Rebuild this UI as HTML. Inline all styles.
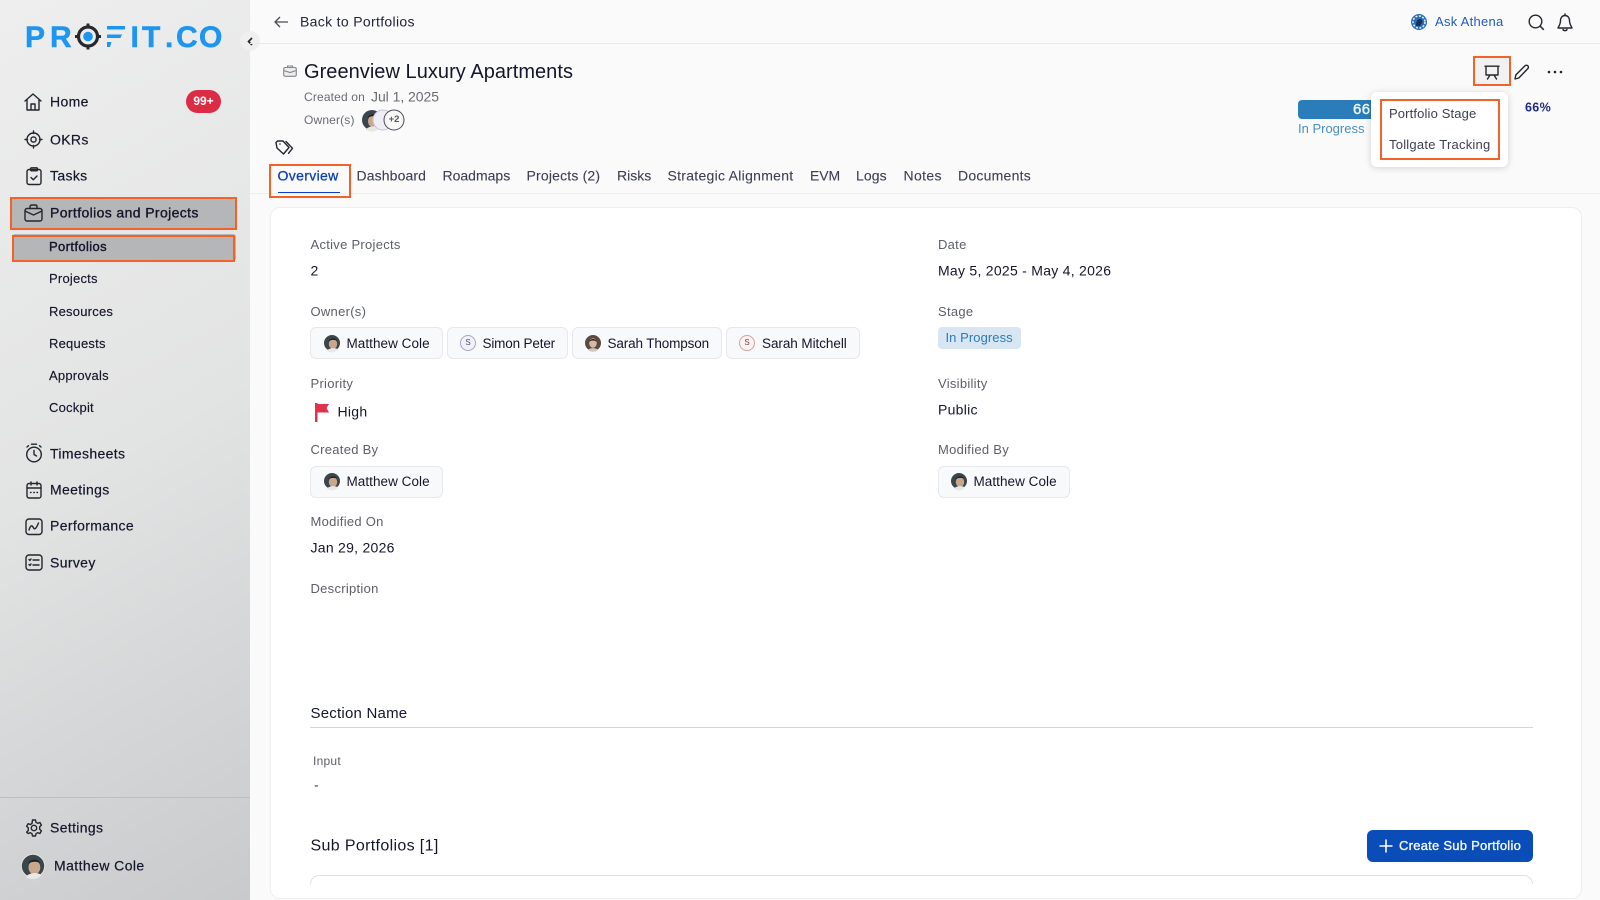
<!DOCTYPE html>
<html lang="en">
<head>
<meta charset="utf-8">
<title>Greenview Luxury Apartments</title>
<style>
html,body{margin:0;padding:0;width:1600px;height:900px;overflow:hidden;background:#fafafa;font-family:"Liberation Sans",sans-serif;color:#14162b}
.abs{position:absolute}
.t{position:absolute;white-space:nowrap;transform:translateY(-50%);line-height:1.2;font-size:14px;letter-spacing:.35px}
svg{position:absolute;overflow:visible}
.i{fill:none;stroke:#24262e;stroke-width:1.4;stroke-linecap:round;stroke-linejoin:round}
#side{position:absolute;left:0;top:0;width:250px;height:900px;background:linear-gradient(150deg,#eeeeee 0%,#e2e3e3 50%,#c9cacc 100%)}
.nav{-webkit-text-stroke:.2px #14162b}
.sub{font-size:13px;letter-spacing:.22px;-webkit-text-stroke:.15px #14162b}
.lab{font-size:13px;color:#5d6068;letter-spacing:.28px}
.val{font-size:14px;letter-spacing:.27px}
.tab{font-size:14px;color:#3c3e52;letter-spacing:.24px;-webkit-text-stroke:.1px #3c3e52}
.chip{position:absolute;background:#f8f9fb;border:1.5px solid #e7e8eb;border-radius:6px;box-sizing:border-box;height:32px}
.orange{position:absolute;border:2px solid #f4622a;box-sizing:border-box}
</style>
</head>
<body>
<svg width="0" height="0" style="position:absolute">
<defs>
<g id="man"><circle cx="0" cy="0" r="8" fill="#39464c"/><ellipse cx="1" cy="1" rx="4.2" ry="5" fill="#c9a68c"/><path d="M-3.5-1.5C-3-5 4-6 5-2 3-3.500-1-3.500-3.500-1.500Z" fill="#1e2326"/><path d="M-5 7.800C-3 4.500 4 4.500 6 6.500A8 8 0 0 1-5 7.800Z" fill="#e8e8e6"/></g>
<g id="wom"><circle cx="0" cy="0" r="8" fill="#5b4a40"/><ellipse cx="0" cy="0" rx="3.800" ry="4.800" fill="#d8b8a4"/><path d="M-4-1C-3-5 3-5 4-1 2-3-2-3-4-1Z" fill="#2d2420"/><path d="M-5 7C-3 4.500 3 4.500 5 7A8 8 0 0 1-5 7Z" fill="#cfc8c2"/></g>
</defs>
</svg>

<!-- SIDEBAR -->
<div id="side"></div>

<svg style="left:0;top:0" width="250" height="70">
<text y="47" x="25 50" font-family="Liberation Sans" font-weight="700" font-size="30" fill="#1e96f0" stroke="#1e96f0" stroke-width=".5">PR</text>
<circle cx="88" cy="36.500" r="9.500" fill="none" stroke="#26282c" stroke-width="3.200"/>
<circle cx="88" cy="36.500" r="4.800" fill="#1e96f0"/>
<path d="M88 23.500v4M88 45.500v4M75 36.500h4M97 36.500h4" stroke="#26282c" stroke-width="3"/>
<path d="M107 26h18v3.500h-18zM107 34.500h15l-1.500 3.500H107zM107 42h4.500l-1.500 5h-3z" fill="#1e96f0"/>
<text y="47" x="130.500 142 165 176 199" font-family="Liberation Sans" font-weight="700" font-size="30" fill="#1e96f0" stroke="#1e96f0" stroke-width=".5">IT.CO</text>
</svg>

<div class="t nav" style="left:50px;top:102px">Home</div>
<div class="abs" style="left:186px;top:90px;width:35px;height:23px;border-radius:12px;background:#dc2b45;color:#fff;font-size:12px;font-weight:700;text-align:center;line-height:23px">99+</div>
<div class="t nav" style="left:50px;top:140px">OKRs</div>
<div class="t nav" style="left:50px;top:176px">Tasks</div>

<div class="abs" style="left:10px;top:197px;width:227px;height:33px;background:#b5b6b8"></div>
<div class="orange" style="left:10px;top:197px;width:227px;height:33px"></div>
<div class="t nav" style="left:50px;top:213px;-webkit-text-stroke:.35px #14162b;letter-spacing:.38px">Portfolios and Projects</div>
<div class="abs" style="left:12px;top:234px;width:224px;height:27px;background:#b5b6b8;border-radius:3px"></div>
<div class="orange" style="left:12px;top:235px;width:223px;height:27px"></div>
<div class="t sub" style="left:49px;top:246.500px;-webkit-text-stroke:.4px #14162b;letter-spacing:.38px">Portfolios</div>
<div class="t sub" style="left:49px;top:279px">Projects</div>
<div class="t sub" style="left:49px;top:311.500px">Resources</div>
<div class="t sub" style="left:49px;top:344px">Requests</div>
<div class="t sub" style="left:49px;top:376px">Approvals</div>
<div class="t sub" style="left:49px;top:408px">Cockpit</div>
<div class="t nav" style="left:50px;top:453.500px">Timesheets</div>
<div class="t nav" style="left:50px;top:490px">Meetings</div>
<div class="t nav" style="left:50px;top:526px">Performance</div>
<div class="t nav" style="left:50px;top:563px">Survey</div>
<div class="abs" style="left:0;top:797px;width:250px;height:1px;background:#bdbec0"></div>
<div class="t nav" style="left:50px;top:828px">Settings</div>
<div class="t nav" style="left:54px;top:866px;font-size:14px;letter-spacing:.42px">Matthew Cole</div>
<svg style="left:33px;top:866px" width="1" height="1"><circle r="12" fill="#e8e8e8"/><g transform="scale(1.400)"><use href="#man"/></g></svg>

<!-- sidebar icons -->
<svg style="left:24px;top:93px" width="18" height="18" viewBox="0 0 18 18"><path class="i" d="M1 8 9 1l8 7M3 7v10h12V7M7 17v-6h4v6"/></svg>
<svg style="left:24px;top:130px" width="19" height="19" viewBox="0 0 19 19"><circle class="i" cx="9.500" cy="9.500" r="6.500"/><circle class="i" cx="9.500" cy="9.500" r="2.600"/><path class="i" d="M9.500 1v2.500M9.500 15.500V18M1 9.500h2.500M15.500 9.500H18"/></svg>
<svg style="left:26px;top:167px" width="16" height="18" viewBox="0 0 16 18"><rect class="i" x="1" y="2.500" width="14" height="15" rx="2"/><rect class="i" x="4.500" y=".8" width="7" height="3" rx="1"/><path class="i" d="m5 10.500 2.300 2.300L11 9"/></svg>
<svg style="left:24px;top:204px" width="19" height="18" viewBox="0 0 19 18"><rect class="i" x="1" y="4.500" width="17" height="12.500" rx="2"/><path class="i" d="M6 4.500V2.500C6 1.500 7 1 8 1h3c1 0 2 .5 2 1.500v2M1 7l8.500 4L18 7"/></svg>
<svg style="left:25px;top:443px" width="18" height="20" viewBox="0 0 18 20"><circle class="i" cx="9" cy="11.500" r="7.300"/><path class="i" d="M9 7.500v4l2.500 1.500M6.500 1.200h5M2 4l1.500-1.300M16 4l-1.500-1.300"/></svg>
<svg style="left:26px;top:481px" width="16" height="18" viewBox="0 0 16 18"><rect class="i" x="1" y="2.500" width="14" height="14.500" rx="2"/><path class="i" d="M1 7h14M5 1v3M11 1v3M4.500 11.500h.5M7.800 11.500h.5M11 11.500h.5"/></svg>
<svg style="left:25px;top:518px" width="18" height="17" viewBox="0 0 18 17"><rect class="i" x="1" y="1" width="16" height="15.500" rx="3"/><path class="i" d="M4 12c1.500-5 3-5 4.300-2.500S11 11 13.500 5"/></svg>
<svg style="left:25px;top:554px" width="18" height="17" viewBox="0 0 18 17"><rect class="i" x="1" y="1" width="16" height="15" rx="3"/><path class="i" d="M8 6h6M8 11h6M4 5.500l1 1 1-1.500M4 10.500l1 1 1-1.500"/></svg>
<svg style="left:25px;top:819px" width="18" height="18" viewBox="0 0 18 18"><circle class="i" cx="9" cy="9" r="2.700"/><path class="i" d="M7.500 1h3l.5 2.300 1.700 1 2.200-.8 1.500 2.600-1.700 1.600v2.600l1.700 1.600-1.500 2.600-2.200-.8-1.700 1-.5 2.300h-3l-.5-2.300-1.700-1-2.200.8L1.600 13.100l1.700-1.600V8.900L1.600 7.300l1.500-2.600 2.200.8 1.700-1z"/></svg>

<!-- collapse -->
<div class="abs" style="left:240px;top:31px;width:20px;height:20px;border-radius:50%;background:#efefef"></div>
<svg style="left:247px;top:37px" width="6" height="9" viewBox="0 0 6 9"><path d="M5 1 1.500 4.500 5 8" fill="none" stroke="#1e2028" stroke-width="1.600"/></svg>

<!-- HEADER -->
<div class="abs" style="left:250px;top:43px;width:1350px;height:1px;background:#e9e9e9"></div>
<svg style="left:274px;top:15px" width="15" height="14" viewBox="0 0 15 14"><path d="M14 7H1M6 2 1 7l5 5" fill="none" stroke="#4a4c55" stroke-width="1.300"/></svg>
<div class="t" style="left:300px;top:22px;font-size:14px;color:#22243a;letter-spacing:.33px">Back to Portfolios</div>

<svg style="left:1411px;top:14px" width="16" height="16" viewBox="0 0 16 16"><circle cx="8" cy="8" r="8" fill="#2a6fb8"/><circle cx="8" cy="8" r="6" fill="none" stroke="#e8eef5" stroke-width="1.500" stroke-dasharray="2 1.500"/><path d="M5 12c0-4 1-7 4-7 2 0 3 2 2 4l-2 3z" fill="#16325c"/></svg>
<div class="t" style="left:1435px;top:21.500px;font-size:13px;color:#1f5cc0;letter-spacing:.28px">Ask Athena</div>
<svg style="left:1528px;top:14px" width="17" height="17" viewBox="0 0 17 17"><circle cx="7.500" cy="7.500" r="6.300" fill="none" stroke="#24262e" stroke-width="1.400"/><path d="m12 12 3.800 3.800" stroke="#24262e" stroke-width="1.500"/></svg>
<svg style="left:1557px;top:13px" width="16" height="19" viewBox="0 0 16 19"><path class="i" d="M8 2.500C5 2.500 3.500 5 3.500 7.500c0 4-2 6-2.500 7.500h14c-.5-1.500-2.500-3.500-2.500-7.500C12.500 5 11 2.500 8 2.500ZM8 1v1.500M6 16.500c.5 1.500 3.500 1.500 4 0"/></svg>

<!-- TITLE -->
<svg style="left:283px;top:65px" width="14" height="12" viewBox="0 0 14 12"><rect x=".7" y="2.500" width="12.600" height="8.800" rx="1.500" fill="#eceded" stroke="#84868c" stroke-width="1.100"/><path d="M4.500 2.500V1h5v1.500M.7 5.500l6.300 2 6.300-2" fill="none" stroke="#84868c" stroke-width="1.100"/></svg>
<div class="t" style="left:304px;top:72px;font-size:20px;letter-spacing:.04px;color:#14162b">Greenview Luxury Apartments</div>
<div class="t" style="left:304px;top:97px;font-size:12px;color:#6a6c74;letter-spacing:.16px">Created on</div>
<div class="t" style="left:371px;top:96.500px;font-size:14px;color:#6a6c74;letter-spacing:-.05px">Jul 1, 2025</div>
<div class="t" style="left:304px;top:120px;font-size:12px;color:#6a6c74;letter-spacing:.16px">Owner(s)</div>
<svg style="left:372px;top:120px" width="1" height="1"><g transform="scale(1.250)"><use href="#man"/></g></svg>
<svg style="left:383px;top:120px" width="1" height="1"><circle r="10" fill="#efeef6" stroke="#c8c4dc"/></svg>
<svg style="left:394px;top:120px" width="1" height="1"><circle r="10" fill="#f8f8f8" stroke="#4a4c55" stroke-width="1"/></svg>
<div class="abs" style="left:384px;top:113px;width:20px;text-align:center;font-size:9.500px;font-weight:700;color:#55575f;line-height:14px">+2</div>
<svg style="left:275px;top:140px" width="19" height="16" viewBox="0 0 19 16"><path class="i" d="M1 2.500 2.500 1H8l6 6.500-5.500 6.500L2 8ZM11 1.500l6.500 6.800-4 5"/><circle cx="5" cy="4" r=".8" fill="#24262e"/></svg>

<!-- TABS -->
<div class="abs" style="left:250px;top:193px;width:1350px;height:1px;background:#eeeeee"></div>
<div class="t" style="left:277.500px;top:175.500px;font-size:14px;color:#0f40b8;letter-spacing:.35px;-webkit-text-stroke:.3px #0f40b8">Overview</div>
<div class="abs" style="left:278px;top:191.500px;width:62px;height:1.500px;background:#0f3fc4"></div>
<div class="orange" style="left:269px;top:164px;width:82px;height:34px"></div>
<div class="t tab" style="left:356.500px;top:175.500px;letter-spacing:.12px">Dashboard</div>
<div class="t tab" style="left:442.500px;top:175.500px;letter-spacing:0">Roadmaps</div>
<div class="t tab" style="left:526.500px;top:175.500px;letter-spacing:.18px">Projects (2)</div>
<div class="t tab" style="left:617px;top:175.500px;letter-spacing:.0">Risks</div>
<div class="t tab" style="left:667.500px;top:175.500px;letter-spacing:.28px">Strategic Alignment</div>
<div class="t tab" style="left:810px;top:175.500px;letter-spacing:-.1px">EVM</div>
<div class="t tab" style="left:856px;top:175.500px;letter-spacing:.1px">Logs</div>
<div class="t tab" style="left:903.500px;top:175.500px;letter-spacing:.35px">Notes</div>
<div class="t tab" style="left:958px;top:175.500px;letter-spacing:.24px">Documents</div>

<!-- CARD -->
<div class="abs" style="left:270px;top:207px;width:1312px;height:692px;background:#fff;border:1px solid #eeeeee;border-radius:10px;box-sizing:border-box"></div>

<div class="t lab" style="left:310.500px;top:245px">Active Projects</div>
<div class="t val" style="left:310.500px;top:271px">2</div>
<div class="t lab" style="left:310.500px;top:311.500px">Owner(s)</div>

<div class="chip" style="left:310px;top:327px;width:133px"></div>
<svg style="left:332px;top:343px" width="1" height="1"><use href="#man"/></svg>
<div class="t val" style="left:346.500px;top:343.500px;font-size:13.500px;letter-spacing:.05px">Matthew Cole</div>

<div class="chip" style="left:447px;top:327px;width:121px"></div>
<svg style="left:468px;top:343px" width="1" height="1"><circle r="7.500" fill="#f2f1f9" stroke="#a8a4cc"/></svg>
<div class="abs" style="left:462px;top:338px;width:12px;text-align:center;font-size:8px;line-height:10px;color:#4b4878">S</div>
<div class="t val" style="left:482.500px;top:343.500px;font-size:13.500px;letter-spacing:-.16px">Simon Peter</div>

<div class="chip" style="left:572px;top:327px;width:150px"></div>
<svg style="left:593px;top:343px" width="1" height="1"><use href="#wom"/></svg>
<div class="t val" style="left:607.500px;top:343.500px;font-size:13.500px;letter-spacing:-.13px">Sarah Thompson</div>

<div class="chip" style="left:726px;top:327px;width:134px"></div>
<svg style="left:747px;top:343px" width="1" height="1"><circle r="7.500" fill="#fbf3f2" stroke="#d0a4a0"/></svg>
<div class="abs" style="left:741px;top:338px;width:12px;text-align:center;font-size:8px;line-height:10px;color:#843c3c">S</div>
<div class="t val" style="left:762px;top:343.500px;font-size:13.500px;letter-spacing:-.06px">Sarah Mitchell</div>

<div class="t lab" style="left:310.500px;top:383.500px">Priority</div>
<svg style="left:314px;top:402px" width="16" height="20" viewBox="0 0 16 20"><path d="M1 1h2.500v19H1z" fill="#e0324c"/><path d="M3 2h12l-2.500 4 2.500 4.500H3z" fill="#e0324c"/></svg>
<div class="t val" style="left:337.500px;top:412px">High</div>

<div class="t lab" style="left:310.500px;top:450px">Created By</div>
<div class="chip" style="left:310px;top:466px;width:133px"></div>
<svg style="left:332px;top:481px" width="1" height="1"><use href="#man"/></svg>
<div class="t val" style="left:346.500px;top:481.500px;font-size:13.500px;letter-spacing:.05px">Matthew Cole</div>

<div class="t lab" style="left:310.500px;top:521.500px">Modified On</div>
<div class="t val" style="left:310.500px;top:548px">Jan 29, 2026</div>
<div class="t lab" style="left:310.500px;top:588.500px">Description</div>

<div class="t lab" style="left:938px;top:245px">Date</div>
<div class="t val" style="left:938px;top:271px">May 5, 2025 - May 4, 2026</div>
<div class="t lab" style="left:938px;top:311.500px">Stage</div>
<div class="abs" style="left:938px;top:327px;width:83px;height:22px;background:#d7e6f2;border-radius:4px"></div>
<div class="t" style="left:945.500px;top:338px;font-size:13px;color:#2a7db8;letter-spacing:.07px">In Progress</div>
<div class="t lab" style="left:938px;top:383.500px">Visibility</div>
<div class="t val" style="left:938px;top:409.500px">Public</div>
<div class="t lab" style="left:938px;top:450px">Modified By</div>
<div class="chip" style="left:938px;top:466px;width:132px"></div>
<svg style="left:959px;top:481px" width="1" height="1"><use href="#man"/></svg>
<div class="t val" style="left:973.500px;top:481.500px;font-size:13.500px;letter-spacing:.05px">Matthew Cole</div>

<div class="t" style="left:310.500px;top:713.500px;font-size:15px;letter-spacing:.22px">Section Name</div>
<div class="abs" style="left:310px;top:727px;width:1223px;height:1px;background:#d6d6d8"></div>
<div class="t" style="left:313px;top:761px;font-size:12px;color:#5d6068;letter-spacing:.25px">Input</div>
<div class="t val" style="left:314px;top:785px;color:#3c3e52">-</div>
<div class="t" style="left:310.500px;top:845.500px;font-size:16px;letter-spacing:.35px">Sub Portfolios [1]</div>

<div class="abs" style="left:1367px;top:830px;width:166px;height:32px;background:#0b4db8;border-radius:6px"></div>
<svg style="left:1379px;top:839px" width="14" height="14" viewBox="0 0 14 14"><path d="M7 .5v13M.5 7h13" stroke="#fff" stroke-width="1.600"/></svg>
<div class="t" style="left:1399px;top:845.500px;font-size:13px;color:#f4f7ff;letter-spacing:.25px;-webkit-text-stroke:.35px #f4f7ff">Create Sub Portfolio</div>

<div class="abs" style="left:310px;top:875px;width:1223px;height:9px;border:1px solid #e2e2e4;border-bottom:0;border-radius:9px 9px 0 0;box-sizing:border-box"></div>

<!-- PROGRESS -->
<div class="abs" style="left:1298px;top:100px;width:90px;height:19px;background:#2a7db8;border-radius:4px"></div>
<div class="t" style="left:1353px;top:109.500px;font-size:15px;color:#f0f6fb;-webkit-text-stroke:.4px #f0f6fb">66</div>
<div class="t" style="left:1298px;top:129px;font-size:13px;color:#4a8fc0;letter-spacing:0">In Progress</div>
<div class="t" style="left:1525px;top:107.500px;font-size:12.500px;font-weight:700;color:#1a2a8a">66%</div>

<!-- ACTIONS -->
<div class="abs" style="left:1473px;top:56px;width:38px;height:30px;background:#f1f1f1"></div>
<div class="orange" style="left:1473px;top:56px;width:38px;height:30px"></div>
<svg style="left:1484px;top:65px" width="16" height="15" viewBox="0 0 16 15"><path class="i" d="M1 1.200h14M2 1.200V10h12V1.200M6 10l-2.500 4M10 10l2.500 4"/></svg>
<svg style="left:1514px;top:64px" width="16" height="16" viewBox="0 0 16 16"><path class="i" d="M1 15l.8-4L11 1.800c.8-.8 2-.8 2.800 0s.8 2 0 2.800L4.800 14Z"/></svg>
<svg style="left:1547px;top:70px" width="16" height="4" viewBox="0 0 16 4"><circle cx="2" cy="2" r="1.300" fill="#24262e"/><circle cx="8" cy="2" r="1.300" fill="#24262e"/><circle cx="14" cy="2" r="1.300" fill="#24262e"/></svg>

<!-- DROPDOWN -->
<div class="abs" style="left:1371px;top:92px;width:137px;height:75px;background:#fff;border-radius:6px;box-shadow:0 1px 7px rgba(0,0,0,.16)"></div>
<div class="orange" style="left:1380px;top:99px;width:120px;height:61px"></div>
<div class="t" style="left:1389px;top:113.500px;font-size:13px;color:#3c3e52;letter-spacing:.14px">Portfolio Stage</div>
<div class="t" style="left:1389px;top:145px;font-size:13px;color:#3c3e52;letter-spacing:.23px">Tollgate Tracking</div>
</body>
</html>
